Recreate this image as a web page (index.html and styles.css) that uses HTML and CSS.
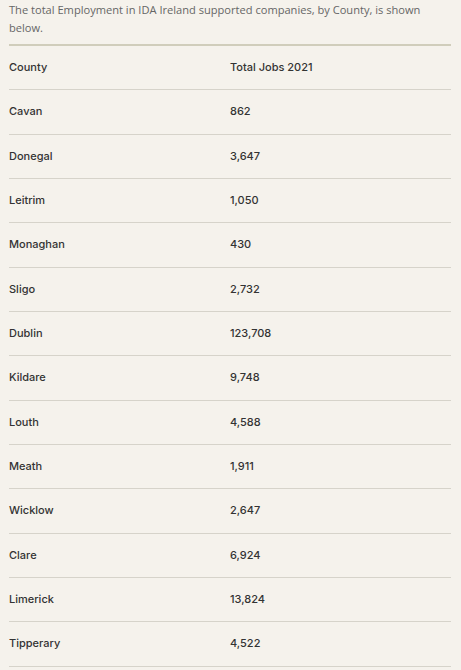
FILE: index.html
```html
<!DOCTYPE html>
<html lang="en">
<head>
<meta charset="utf-8">
<title>IDA Ireland employment by county</title>
<link rel="stylesheet" href="styles.css">
</head>
<body>
<div class="content">
  <p class="intro">The total Employment in IDA Ireland supported companies, by County, is shown below.</p>
  <table class="jobs">
    <thead>
      <tr><th>County</th><th>Total Jobs 2021</th></tr>
    </thead>
    <tbody>
      <tr><td>Cavan</td><td>862</td></tr>
      <tr><td>Donegal</td><td>3,647</td></tr>
      <tr><td>Leitrim</td><td>1,050</td></tr>
      <tr><td>Monaghan</td><td>430</td></tr>
      <tr><td>Sligo</td><td>2,732</td></tr>
      <tr><td>Dublin</td><td>123,708</td></tr>
      <tr><td>Kildare</td><td>9,748</td></tr>
      <tr><td>Louth</td><td>4,588</td></tr>
      <tr><td>Meath</td><td>1,911</td></tr>
      <tr><td>Wicklow</td><td>2,647</td></tr>
      <tr><td>Clare</td><td>6,924</td></tr>
      <tr><td>Limerick</td><td>13,824</td></tr>
      <tr><td>Tipperary</td><td>4,522</td></tr>
    </tbody>
  </table>
</div>
</body>
</html>
```
FILE: styles.css
```css
html, body {
  margin: 0;
  padding: 0;
  background: #f5f2ec;
}
body {
  font-family: "Open Sans", "Liberation Sans", sans-serif;
  color: #333;
}
.content {
  padding: 0 10px 0 9px;
}
.intro {
  margin: 0;
  padding-top: 1px;
  font-size: 11.1px;
  line-height: 18px;
  color: #666;
  font-weight: 400;
}
.jobs {
  width: 442px;
  margin-top: 7px;
  border-collapse: collapse;
  border-top: 2px solid #d0cdbb;
  table-layout: fixed;
}
.jobs th,
.jobs td {
  width: 50%;
  text-align: left;
  padding: 13px 0 14px;
  font-family: "Inter", "Open Sans", sans-serif;
  font-size: 11px;
  line-height: 16.33px;
  font-weight: 500;
  color: #333;
  border-bottom: 1px solid #d6d3ca;
}
```
